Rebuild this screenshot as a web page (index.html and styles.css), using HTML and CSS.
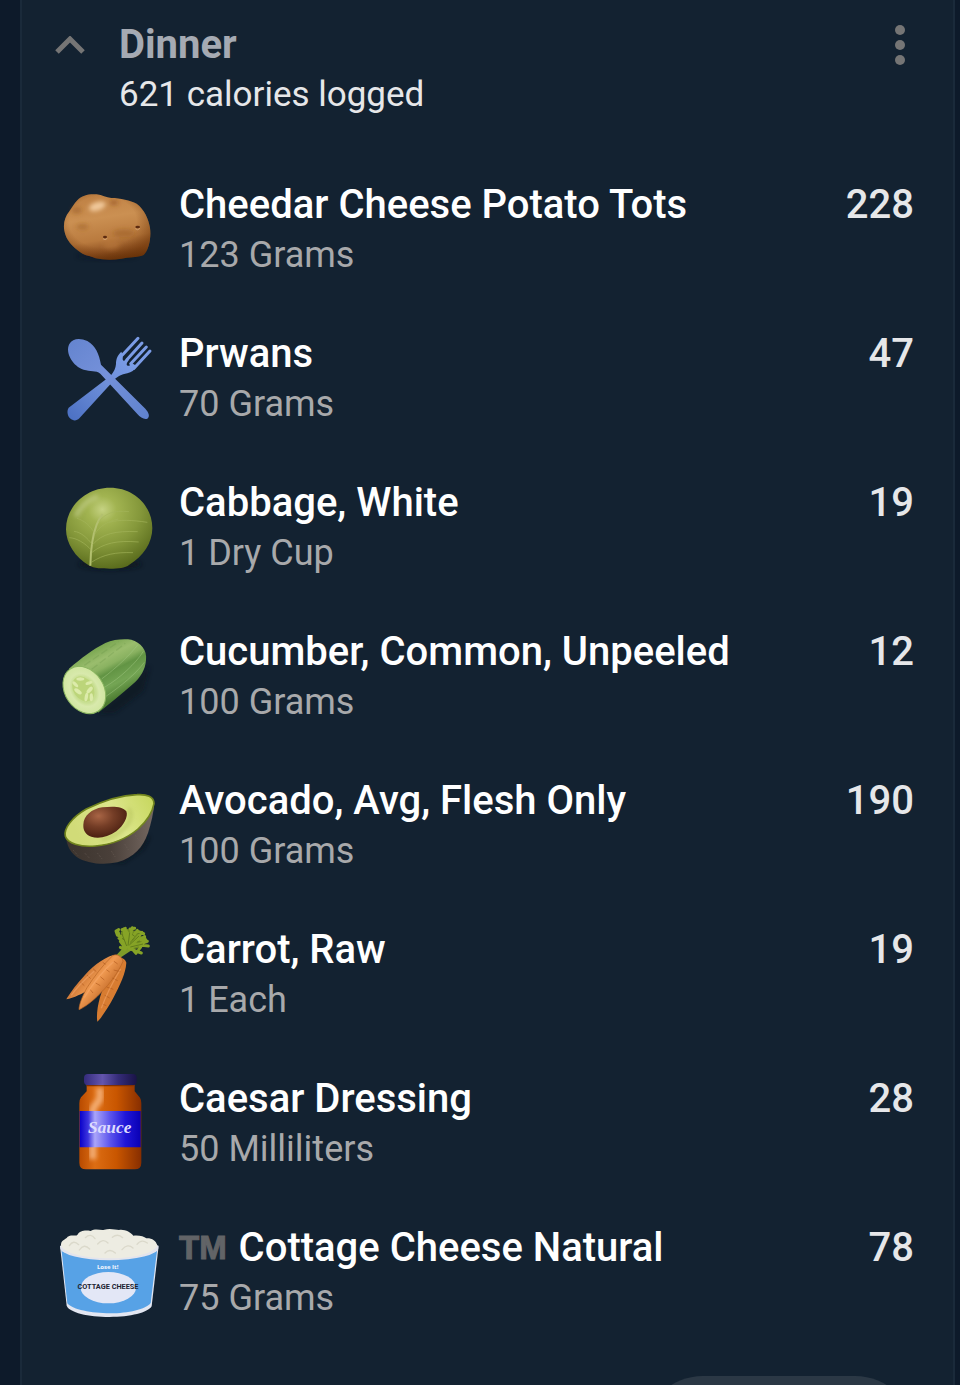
FILE: index.html
```html
<!DOCTYPE html>
<html lang="en">
<head>
<meta charset="utf-8">
<meta name="viewport" content="width=device-width, initial-scale=1">
<title>Dinner</title>
<link rel="stylesheet" href="styles.css">
</head>
<body>
<main class="card">
  <header class="meal-header">
    <button class="icon-button" type="button" aria-label="Collapse">
      <svg class="chevron" viewBox="0 0 30 18" aria-hidden="true"><path d="M2 16 15 3 28 16" fill="none" stroke="#757575" stroke-width="5"/></svg>
    </button>
    <div class="meal-text">
      <h1 class="meal-name">Dinner</h1>
      <p class="meal-total">621 calories logged</p>
    </div>
    <button class="icon-button" type="button" aria-label="More options">
      <svg class="dots" viewBox="0 0 10 40" fill="#757575" aria-hidden="true"><circle cx="5" cy="5" r="5"/><circle cx="5" cy="20" r="5"/><circle cx="5" cy="35" r="5"/></svg>
    </button>
  </header>

  <ul class="foods">
    <li class="food">
      <svg class="food-icon" viewBox="0 -9 360 360" aria-hidden="true">
        <defs>
          <linearGradient id="potato" x1="0.4" y1="0" x2="0.6" y2="1"><stop offset="0" stop-color="#bf8144"/><stop offset=".35" stop-color="#cb9052"/><stop offset=".68" stop-color="#b97a3e"/><stop offset=".86" stop-color="#8f5222"/><stop offset="1" stop-color="#5e2d09"/></linearGradient>
          <radialGradient id="potatoEdge" cx=".45" cy=".42" r=".6"><stop offset=".65" stop-color="#713709" stop-opacity="0"/><stop offset="1" stop-color="#713709" stop-opacity=".55"/></radialGradient>
          <filter id="soft" x="-50%" y="-50%" width="200%" height="200%"><feGaussianBlur stdDeviation="6"/></filter>
        </defs>
        <ellipse cx="170" cy="258" rx="90" ry="10" fill="#0a1420" opacity=".5" filter="url(#soft)"/>
        <path d="M82 91C96 75 118 71 140 73C157 75 168 83 184 84C211 84 241 92 260 101C283 119 295 145 300 174C304 205 296 240 281 255C260 264 236 261 214 266C188 271 159 270 137 265C120 258 103 256 91 247C66 228 48 210 43 182C39 161 45 139 58 124C67 112 72 101 82 91Z" fill="url(#potato)"/>
        <g filter="url(#soft)"><ellipse cx="80" cy="121" rx="16" ry="10" fill="#94571f" opacity=".5"/><ellipse cx="97" cy="170" rx="18" ry="9" fill="#9a5b26" opacity=".5"/><ellipse cx="192" cy="98" rx="12" ry="7" fill="#8d4d1c" opacity=".6"/><ellipse cx="222" cy="190" rx="34" ry="12" fill="#92521f" opacity=".4"/><ellipse cx="185" cy="225" rx="25" ry="16" fill="#bb7a3c" opacity=".5"/><ellipse cx="142" cy="109" rx="26" ry="13" fill="#f0c89a" transform="rotate(-18 142 109)"/></g>
        <path d="M82 91C96 75 118 71 140 73C157 75 168 83 184 84C211 84 241 92 260 101C283 119 295 145 300 174C304 205 296 240 281 255C260 264 236 261 214 266C188 271 159 270 137 265C120 258 103 256 91 247C66 228 48 210 43 182C39 161 45 139 58 124C67 112 72 101 82 91Z" fill="url(#potatoEdge)"/>
        <ellipse cx="165" cy="201" rx="6" ry="4" fill="#5d2b10"/><path d="M159 206Q165 213 172 205" fill="none" stroke="#d0a072" stroke-width="3"/>
        <ellipse cx="263" cy="171" rx="7" ry="4" fill="#5d2b10"/><path d="M256 176Q263 183 270 175" fill="none" stroke="#d0a072" stroke-width="3"/>
      </svg>
      <div class="food-text"><h2 class="food-name">Cheedar Cheese Potato Tots</h2><p class="food-amount">123 Grams</p></div>
      <span class="food-calories">228</span>
    </li>
    <li class="food">
      <svg class="food-icon" viewBox="0 -12 360 360" aria-hidden="true">
        <defs><linearGradient id="spoon" x1="0" y1="0" x2="1" y2="1"><stop offset="0" stop-color="#6484cf"/><stop offset=".45" stop-color="#7591da"/><stop offset="1" stop-color="#5f82ce"/></linearGradient>
        <linearGradient id="fork" x1="1" y1="0" x2="0" y2="1"><stop offset="0" stop-color="#7da0ea"/><stop offset=".45" stop-color="#6f90da"/><stop offset="1" stop-color="#4a6fc2"/></linearGradient></defs>
        <path d="M264 55 218 104M276 69 230 120M289 81 242 131M300 93 252 145" stroke="#7b9ce6" stroke-width="9" stroke-linecap="round" fill="none"/>
        <path d="M214 95C203 106 198 116 198 132C197 144 192 156 182 167L56 263C50 272 52 286 60 295C69 303 79 304 88 295L192 181C201 169 214 164 232 160C245 157 252 151 261 139L244 128C240 140 232 139 230 134C230 128 234 123 237 119L231 114C224 125 215 127 219 108Z" fill="url(#fork)"/>
        <path d="M58 72C68 54 91 53 112 63C137 77 147 102 153 134L286 266C296 277 301 289 292 296C283 300 271 292 262 282L151 161C138 150 121 155 101 149C70 140 44 98 58 72Z" fill="url(#spoon)"/>
      </svg>
      <div class="food-text"><h2 class="food-name">Prwans</h2><p class="food-amount">70 Grams</p></div>
      <span class="food-calories">47</span>
    </li>
    <li class="food">
      <svg class="food-icon" viewBox="0 -15 360 360" aria-hidden="true">
        <defs><radialGradient id="cabbage" cx=".42" cy=".27" r=".75"><stop offset="0" stop-color="#c5d282"/><stop offset=".22" stop-color="#a2b451"/><stop offset=".6" stop-color="#84973a"/><stop offset="1" stop-color="#596b1c"/></radialGradient></defs>
        <ellipse cx="180" cy="283" rx="95" ry="16" fill="#08121d" opacity=".7" filter="url(#soft)"/>
        <path d="M180 53C252 53 307 107 307 175C307 218 280 260 238 284C225 294 205 296 180 296C157 296 132 296 116 286C76 263 48 220 48 178C48 109 108 53 180 53Z" fill="url(#cabbage)"/>
        <path d="M78 139C90 112 112 90 144 79" stroke="#d2dba3" stroke-width="14" opacity=".5" fill="none" filter="url(#soft)"/>
        <path d="M121 287C122 239 128 195 140 164C145 151 151 141 158 132" stroke="#b3c06f" stroke-width="6" fill="none"/>
        <g fill="none" stroke="#a5b55c" stroke-width="3" opacity=".6"><path d="M128 225C111 202 92 186 72 184M125 241C105 219 80 204 58 203M134 190C120 166 105 153 81 145M134 193C150 168 170 155 205 147M129 223C156 191 196 182 263 185M125 248C159 220 201 210 266 216M124 277C160 253 197 246 249 248M146 156C164 131 190 120 237 125M178 157C210 148 245 150 292 157"/></g>
      </svg>
      <div class="food-text"><h2 class="food-name">Cabbage, White</h2><p class="food-amount">1 Dry Cup</p></div>
      <span class="food-calories">19</span>
    </li>
    <li class="food">
      <svg class="food-icon" viewBox="0 -21 360 360" aria-hidden="true">
        <defs><linearGradient id="cucumber" gradientUnits="userSpaceOnUse" x1="130" y1="80" x2="205" y2="230"><stop offset="0" stop-color="#76a44e"/><stop offset=".25" stop-color="#9abd6d"/><stop offset=".4" stop-color="#8ab261"/><stop offset=".52" stop-color="#629444"/><stop offset=".75" stop-color="#74a554"/><stop offset="1" stop-color="#4c7c31"/></linearGradient>
        <radialGradient id="flesh"><stop offset="0" stop-color="#bfd580"/><stop offset=".55" stop-color="#c8df92"/><stop offset=".7" stop-color="#d8e9ac"/><stop offset="1" stop-color="#d0e6a0"/></radialGradient></defs>
        <path d="M145 278 300 135 280 210 195 275Z" fill="#09131d" opacity=".55" filter="url(#soft)"/>
        <path d="M57 143C93 112 130 84 166 66C191 55 220 53 244 56C272 65 292 87 288 117C286 146 272 169 248 190C215 219 179 248 145 275Z" fill="url(#cucumber)"/>
        <g fill="none" stroke="#a5c985" stroke-width="3" opacity=".45"><path d="M155 174C201 139 240 101 263 72M165 198C210 171 257 128 280 91M168 226C213 195 258 158 283 124"/></g>
        <path d="M103 133 206 62M125 145 226 67" stroke="#638f43" stroke-width="4" opacity=".25" stroke-dasharray="22 9"/>
        <ellipse cx="103" cy="207" rx="58" ry="76" transform="rotate(-34 103 207)" fill="url(#flesh)" stroke="#8ab560" stroke-width="3"/>
        <ellipse cx="100" cy="204" rx="30" ry="40" transform="rotate(-34 100 204)" fill="#bcd57a"/>
        <g fill="#dcebaa"><ellipse cx="91" cy="174" rx="12" ry="5"/><ellipse cx="76" cy="190" rx="11" ry="5" transform="rotate(45 76 190)"/><ellipse cx="117" cy="186" rx="11" ry="5" transform="rotate(-18 117 186)"/><ellipse cx="84" cy="211" rx="13" ry="6" transform="rotate(35 84 211)"/><ellipse cx="119" cy="207" rx="12" ry="6" transform="rotate(-48 119 207)"/><ellipse cx="109" cy="228" rx="5" ry="13" transform="rotate(10 109 228)"/><ellipse cx="124" cy="229" rx="5" ry="12"/></g>
      </svg>
      <div class="food-text"><h2 class="food-name">Cucumber, Common, Unpeeled</h2><p class="food-amount">100 Grams</p></div>
      <span class="food-calories">12</span>
    </li>
    <li class="food">
      <svg class="food-icon" viewBox="0 -39 360 360" aria-hidden="true">
        <defs><linearGradient id="skin" x1="0" y1="0" x2="1" y2="0"><stop offset="0" stop-color="#3b332d"/><stop offset=".5" stop-color="#493f39"/><stop offset="1" stop-color="#756861"/></linearGradient>
        <radialGradient id="pit" cx=".35" cy=".3" r=".7"><stop offset="0" stop-color="#a96545"/><stop offset=".5" stop-color="#743d26"/><stop offset="1" stop-color="#4c2112"/></radialGradient>
        <linearGradient id="avocado" x1="0" y1=".3" x2="1" y2="0"><stop offset="0" stop-color="#d1db78"/><stop offset=".5" stop-color="#dce68b"/><stop offset="1" stop-color="#c6d65c"/></linearGradient></defs>
        <path d="M100 245 300 180 280 220 220 260Z" fill="#08121c" opacity=".7" filter="url(#soft)"/>
        <path d="M46 165C48 201 55 223 79 242C110 263 160 268 202 259C254 243 278 214 294 171C304 139 312 107 313 79Z" fill="url(#skin)"/>
        <path d="M46 181C40 158 67 123 109 99C159 75 210 58 261 56C291 54 312 62 312 83C307 111 290 136 264 159C231 187 183 206 136 210C91 214 52 202 46 181Z" fill="url(#avocado)" stroke="#71841e" stroke-width="5"/>
        <path d="M153 190C190 184 222 164 237 138C246 119 244 107 235 97" fill="none" stroke="#a8b54e" stroke-width="9" opacity=".6" filter="url(#soft)"/>
        <path d="M100 146C101 119 125 99 157 94C190 90 218 91 229 106C236 122 220 150 199 166C174 184 144 189 124 182C108 176 99 164 100 146Z" fill="url(#pit)"/>
        <path d="M70 223 85 240M104 231 119 247M143 232 158 251M184 225 197 245M224 204 236 223M255 177 267 193M275 148 287 163" stroke="#73665e" stroke-width="3" stroke-dasharray="2 4" opacity=".7"/>
      </svg>
      <div class="food-text"><h2 class="food-name">Avocado, Avg, Flesh Only</h2><p class="food-amount">100 Grams</p></div>
      <span class="food-calories">190</span>
    </li>
    <li class="food">
      <svg class="food-icon" viewBox="0 3 360 360" aria-hidden="true">
        <defs><linearGradient id="carrot" gradientUnits="userSpaceOnUse" x1="112" y1="180" x2="181" y2="235"><stop offset="0" stop-color="#d07a37"/><stop offset=".45" stop-color="#f09a51"/><stop offset="1" stop-color="#c46c2a"/></linearGradient></defs>
        <path d="M206 134 236 101M205 137 239 114" stroke="#809c29" stroke-width="12" stroke-linecap="round"/>
        <path d="M212 62 232 54 258 60 274 74 280 96 264 112 244 116 224 112 216 92Z" fill="#6f8b20"/>
        <g fill="none" stroke="#86a326" stroke-width="9" stroke-linecap="round" stroke-linejoin="round"><path d="M225 115 202 58M202 72 198 60 206 56M228 111 222 53M232 109 247 50M216 56 226 52M240 54 254 52M237 109 276 64M266 62 281 68M240 110 292 91M284 82 290 92M238 113 274 126M221 105 211 91M225 93 207 82M224 79 203 73M235 90 231 65M241 86 262 58M250 94 284 77M251 100 295 105M236 72 226 56M263 83 281 89M246 113 258 127M219 113 211 109M266 116 272 108"/></g>
        <g fill="none" stroke="#627d1c" stroke-width="3"><path d="M230 105 216 69M234 104 239 65M238 102 267 75M241 108 279 99M216 82 224 88M246 70 254 76M262 92 270 90M246 88 252 82"/></g>
        <path d="M190 132C155 143 123 170 95 203C75 225 56 252 49 265C71 260 98 248 121 233C153 208 184 174 210 145Z" fill="url(#carrot)"/>
        <path d="M203 143C184 180 161 221 150 259C142 286 139 318 142 332C152 324 174 291 191 259C210 221 227 188 229 155C226 144 215 137 203 143Z" fill="#d77c31"/>
        <path d="M188 134C158 162 132 198 111 230C98 253 87 280 87 296C102 290 128 271 151 247C182 216 206 182 219 151C216 136 200 127 188 134Z" fill="url(#carrot)" stroke="#b76423" stroke-width="2"/>
        <path d="M129 173 139 182M111 192 122 203M91 213 103 224M158 154 167 160M169 176 179 183M151 197 163 207M137 216 151 224M120 235 129 246M191 177 211 182M187 201 203 209M170 228 190 235M164 253 179 261M157 279 169 284M192 151 203 159" stroke="#ad571d" stroke-width="3" opacity=".6"/>
        <path d="M132 181C103 207 78 233 64 253M190 153C157 180 132 212 103 260M212 174C193 205 173 239 154 292" stroke="#f7aa6e" stroke-width="4" opacity=".5" fill="none"/>
      </svg>
      <div class="food-text"><h2 class="food-name">Carrot, Raw</h2><p class="food-amount">1 Each</p></div>
      <span class="food-calories">19</span>
    </li>
    <li class="food">
      <svg class="food-icon" viewBox="0 3 360 360" aria-hidden="true">
        <defs><linearGradient id="lid"><stop offset="0" stop-color="#342b7b"/><stop offset=".35" stop-color="#6355ad"/><stop offset=".65" stop-color="#352c79"/><stop offset="1" stop-color="#191346"/></linearGradient>
        <linearGradient id="jar"><stop offset="0" stop-color="#b84a00"/><stop offset=".25" stop-color="#dc6d13"/><stop offset=".6" stop-color="#c95600"/><stop offset="1" stop-color="#872e00"/></linearGradient>
        <linearGradient id="label"><stop offset="0" stop-color="#0800c9"/><stop offset=".14" stop-color="#3d35df"/><stop offset=".25" stop-color="#aaa5fa"/><stop offset=".5" stop-color="#5c54ec"/><stop offset=".75" stop-color="#2016d8"/><stop offset="1" stop-color="#0900b4"/></linearGradient></defs>
        <path d="M110 72H254V94L270 113Q274 119 274 130V308Q274 328 254 328H108Q88 328 88 308V130Q88 119 93 112L110 94Z" fill="url(#jar)"/>
        <rect x="102" y="42" width="158" height="34" rx="12" fill="url(#lid)"/>
        <path d="M110 77H251" stroke="#823000" stroke-width="4"/>
        <path d="M150 83V111C149 132 128 135 128 152V298" fill="none" stroke="#fbbf8d" stroke-width="22" opacity=".75" filter="url(#soft)"/>
        <path d="M89 153H272V262H89Z" fill="url(#label)"/>
        <text class="sauce-text" x="179" y="218" text-anchor="middle">Sauce</text>
      </svg>
      <div class="food-text"><h2 class="food-name">Caesar Dressing</h2><p class="food-amount">50 Milliliters</p></div>
      <span class="food-calories">28</span>
    </li>
    <li class="food">
      <svg class="food-icon" viewBox="15 -15 360 360" aria-hidden="true">
        <path d="M45 92 65 272C72 292 130 306 193 306C256 306 309 293 320 274L341 92Z" fill="#e2e6f1"/>
        <path d="M49 99 67 265C83 284 139 295 195 295C249 295 303 283 317 264L337 99Z" fill="#57a2e6"/>
        <ellipse cx="193" cy="98" rx="147" ry="38" fill="#e3e4ed"/>
        <path d="M49 94C44 76 61 75 68 65C80 57 92 65 97 60C105 45 123 46 137 48C151 39 169 47 178 44C194 39 212 44 222 45C239 42 257 52 265 62C282 60 297 64 304 70C320 69 334 77 337 93C323 117 261 130 193 130C123 130 63 117 49 94Z" fill="#edece2"/>
        <g fill="none" stroke="#dbd9cb" stroke-width="4" stroke-linecap="round"><path d="M73 92Q85 73 101 89M103 105Q117 84 134 102M121 68Q137 53 150 71M158 87Q174 68 189 84M202 67Q218 54 233 68M231 104Q248 84 264 99M276 88Q289 71 307 84M180 114Q194 99 211 114"/></g>
        <text class="tub-brand" x="188" y="163" text-anchor="middle">Lose It!</text>
        <ellipse cx="190" cy="218" rx="83" ry="47" fill="#e3e7f6"/>
        <text class="tub-text" x="189" y="223" text-anchor="middle">COTTAGE CHEESE</text>
      </svg>
      <div class="food-text"><h2 class="food-name"><span class="trademark">TM</span> Cottage Cheese Natural</h2><p class="food-amount">75 Grams</p></div>
      <span class="food-calories">78</span>
    </li>
  </ul>
  <button class="add-button" type="button" aria-label="Add food"></button>
</main>
</body>
</html>
```
FILE: styles.css
```css
* {
  box-sizing: border-box;
}

body {
  margin: 0;
  height: 100vh;
  overflow: hidden;
  background: #0d1a2a;
  font-family: Roboto, "Noto Sans", sans-serif;
}

h1,
h2,
p,
ul {
  margin: 0;
  padding: 0;
}

.card {
  display: flex;
  flex-direction: column;
  margin: 0 5px 0 20px;
  border: 2px solid #1a2a3a;
  border-width: 0 2px;
  background: #132231;
}

.meal-header {
  display: flex;
  align-items: flex-start;
  padding: 20px 38px 31px 28px;
}

.meal-text {
  flex: 1;
}

.icon-button {
  display: flex;
  justify-content: center;
  align-items: center;
  height: 50px;
  padding: 0;
  border: 0;
  background: none;
}

.icon-button:first-child {
  width: 40px;
  margin-right: 29px;
}

.icon-button:last-child {
  width: 30px;
}

.chevron {
  width: 30px;
  height: 18px;
}

.dots {
  width: 10px;
  height: 40px;
}

.meal-name {
  color: #a5aab3;
  font-size: 40px;
  line-height: 50px;
  font-weight: 700;
}

.meal-total {
  color: #e6e7e9;
  font-size: 35px;
  line-height: 50px;
}

.foods {
  list-style: none;
}

.food {
  display: grid;
  grid-template-columns: 120px 1fr auto;
  column-gap: 9px;
  padding: 16px 39px 13px 28px;
}

.food-icon {
  width: 120px;
  height: 120px;
}

.food-text,
.food-calories {
  padding-top: 13px;
}

.food-name {
  color: #ffffff;
  font-size: 40px;
  line-height: 50px;
  font-weight: 500;
}

.food-amount {
  color: #a8a9ab;
  font-size: 36px;
  line-height: 50px;
}

.food-calories {
  color: #e6e7e9;
  font-size: 40px;
  line-height: 50px;
  font-weight: 500;
}

.trademark {
  margin-right: 2px;
  color: #626467;
  font-family: "Liberation Sans", sans-serif;
  font-size: 33px;
  line-height: 1;
  font-weight: 700;
  vertical-align: 2px;
  -webkit-text-stroke: 1px #626467;
}

.sauce-text {
  fill: #dedcff;
  font-family: "Liberation Serif", serif;
  font-size: 52px;
  font-style: italic;
  font-weight: 700;
}

.tub-brand {
  fill: #f4f7ff;
  font-family: "Open Sans", sans-serif;
  font-size: 18px;
  font-weight: 700;
}

.tub-text {
  fill: #202331;
  font-family: Roboto, sans-serif;
  font-size: 22px;
  font-weight: 700;
}

.add-button {
  align-self: flex-end;
  width: 272px;
  height: 120px;
  margin: 33px 38px 32px 0;
  border: 0;
  border-radius: 60px;
  background: #2b3845;
}
```
